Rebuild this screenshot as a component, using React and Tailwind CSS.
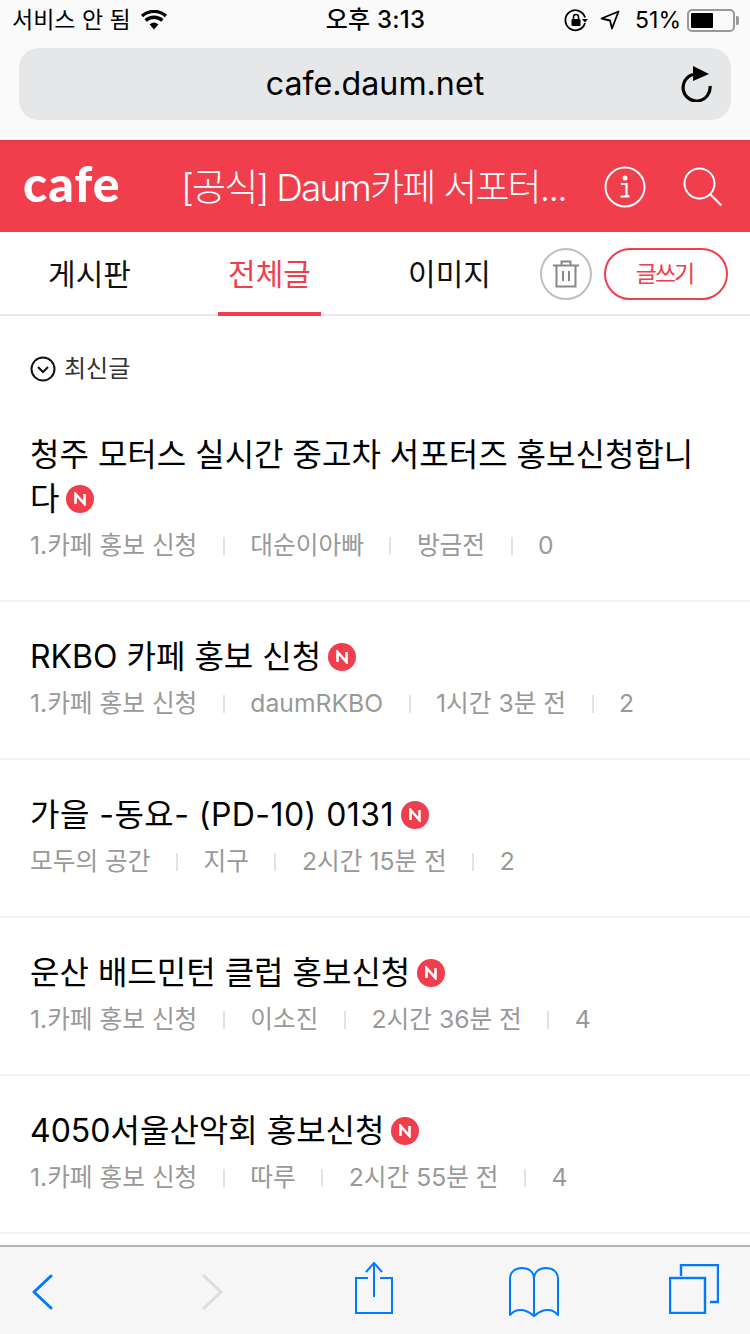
import { Fragment } from "react";

const font = "font-['Inter','Noto_Sans_CJK_KR',sans-serif]";

const posts = [
    { title: "청주 모터스 실시간 중고차 서포터즈 홍보신청합니다", meta: ["1.카페 홍보 신청", "대순이아빠", "방금전", "0"] },
    { title: "RKBO 카페 홍보 신청", meta: ["1.카페 홍보 신청", "daumRKBO", "1시간 3분 전", "2"] },
    { title: "가을 -동요- (PD-10) 0131", wide: true, meta: ["모두의 공간", "지구", "2시간 15분 전", "2"] },
    { title: "운산 배드민턴 클럽 홍보신청", meta: ["1.카페 홍보 신청", "이소진", "2시간 36분 전", "4"] },
    { title: "4050서울산악회 홍보신청", meta: ["1.카페 홍보 신청", "따루", "2시간 55분 전", "4"] },
];

const NewBadge = () => (
    <span className="inline-flex w-[28px] h-[28px] ml-[7px] rounded-full bg-[#f03e4d] items-center justify-center align-[4px]">
        <svg width="14" height="14" viewBox="0 0 14 14">
            <path d="M2.500 12V2L11.500 12V2" fill="none" stroke="#fff" strokeWidth="2.600" />
        </svg>
    </span>
);

const StatusBar = () => (
    <div className="h-[40px] flex items-center justify-between pl-[12px] pr-[11px] text-[23px] text-black">
        <div className="w-[250px] flex items-center gap-[9px]">
            <span className="whitespace-nowrap">서비스 안 됨</span>
            <svg width="28" height="20" viewBox="0 0 28 20">
                <path d="M14 19.500 9.600 14.400a7 7 0 0 1 8.800 0Z" fill="#000" />
                <path d="M5.600 10.500a12.600 12.600 0 0 1 16.800 0M2 6a18 18 0 0 1 24 0" fill="none" stroke="#000" strokeWidth="3.400" />
            </svg>
        </div>
        <span className="font-medium text-[24px] tracking-[0.2px]">오후 3:13</span>
        <div className="w-[250px] flex items-center justify-end">
            <svg width="24" height="24" viewBox="0 0 24 24" className="mr-[12px]">
                <path d="M21 9.500A10 10 0 1 0 21 15" fill="none" stroke="#000" strokeWidth="1.800" />
                <path d="M18 11h6l-3 3.600Z" fill="#000" />
                <rect x="7.500" y="11" width="9" height="7" rx="1" fill="#000" />
                <path d="M9.500 11V9a2.500 2.500 0 0 1 5 0v2" fill="none" stroke="#000" strokeWidth="1.600" />
            </svg>
            <svg width="20" height="20" viewBox="0 0 20 20" className="mr-[15px]">
                <path d="M18.500 1.500 1.500 8.500 10 10.500 12 18.500Z" fill="none" stroke="#000" strokeWidth="1.800" strokeLinejoin="round" />
            </svg>
            <span className="mr-[6px]">51%</span>
            <div className="w-[48px] h-[23px] rounded-[5px] border-2 border-[#999] p-[2px]">
                <div className="w-[22px] h-full bg-black rounded-[1px]" />
            </div>
            <div className="w-[3px] h-[9px] bg-[#999] rounded-r-[2px] ml-[1px]" />
        </div>
    </div>
);

const UrlBar = () => (
    <div className="h-[100px] px-[19px] pt-[8px]">
        <div className="relative h-[72px] rounded-[20px] bg-[#e6e7e9] flex items-center justify-center text-[32.200px] text-black">
            cafe.daum.net
            <svg width="32" height="36" viewBox="0 0 32 36" className="absolute right-[18px] top-[18px]">
                <path d="M12 8.500A13.500 13.500 0 1 0 29 20" fill="none" stroke="#000" strokeWidth="3.200" />
                <path d="M12 0 28 8 12 15Z" fill="#000" />
            </svg>
        </div>
    </div>
);

const CafeHeader = () => (
    <div className="h-[92px] bg-[#f03e4d] border-t border-[#d33a48] flex items-center text-white">
        <span className="w-[160px] pl-[23px] text-[50px] leading-none font-['Lato',sans-serif] font-black tracking-[1px] pb-[8px]">cafe</span>
        <span className="w-[424px] pl-[21px] pt-[2px] text-[37px] font-light tracking-[-1.800px] whitespace-nowrap">[공식] Daum카페 서포터...</span>
        <svg width="42" height="42" viewBox="0 0 42 42" className="ml-[20px]">
            <circle cx="21" cy="21" r="19.500" fill="none" stroke="#fff" strokeWidth="2" />
            <circle cx="21" cy="12" r="2.500" fill="#fff" />
            <path d="M17 18h5.500v12H25M16.500 30.500h9" fill="none" stroke="#fff" strokeWidth="2.200" />
        </svg>
        <svg width="40" height="40" viewBox="0 0 40 40" className="ml-[37px]">
            <circle cx="16.500" cy="16.500" r="15" fill="none" stroke="#fff" strokeWidth="2" />
            <path d="M27 27 38.500 38.500" stroke="#fff" strokeWidth="2.200" />
        </svg>
    </div>
);

const Tabs = () => (
    <div className="h-[84px] border-b-2 border-[#e8e8e8] flex text-[30px] text-[#111]">
        <div className="w-[179px] flex items-center justify-center pt-[2px]">게시판</div>
        <div className="w-[103px] ml-[39px] h-[84px] border-b-[4px] border-[#f03e4d] text-[#f03e4d] flex items-center justify-center pt-[4px]">전체글</div>
        <div className="w-[179px] ml-[39px] flex items-center justify-center pt-[2px]">이미지</div>
        <div className="w-[52px] h-[52px] mt-[16px] ml-[1px] rounded-full border-2 border-[#c0c0c0] flex items-center justify-center">
            <svg width="26" height="28" viewBox="0 0 26 28" fill="none" stroke="#888" strokeWidth="2">
                <path d="M0 5.500h26M8.500 5V1.500h9V5M3.500 6v20.500h19V6M10 11v10M16 11v10" />
            </svg>
        </div>
        <div className="w-[124px] h-[52px] mt-[16px] ml-[12px] pr-[3px] rounded-full border-2 border-[#f03e4d] text-[#f03e4d] text-[23px] tracking-[-2px] flex items-center justify-center">글쓰기</div>
    </div>
);

const PostRow = ({ post }) => (
    <div className="border-b-2 border-[#f2f2f2] px-[30px] pt-[33px] pb-[32px] first:pt-[14px] first:pb-[33px]">
        <div className={`text-[32px] leading-[44px] text-black ${post.wide ? "tracking-[0.45px]" : ""}`}>
            {post.title}
            <NewBadge />
        </div>
        <div className="mt-[3px] h-[44px] flex items-center text-[24.700px] text-[#999]">
            {post.meta.map((m, i) => (
                <Fragment key={i}>
                    {i > 0 && <span className="w-[2px] h-[18px] mx-[25.500px] bg-[#e3e3e3]" />}
                    <span className="whitespace-nowrap">{m}</span>
                </Fragment>
            ))}
        </div>
    </div>
);

const BottomBar = () => (
    <div className="h-[89px] border-t-2 border-[#b4b4b4] bg-[#f6f6f6] flex items-start pl-[32px]">
        <svg width="22" height="36" viewBox="0 0 22 36" fill="none" stroke="#007aff" strokeWidth="3" strokeLinecap="round" strokeLinejoin="round" className="mt-[27px]">
            <path d="M19 2 2 18l17 16" />
        </svg>
        <svg width="22" height="36" viewBox="0 0 22 36" fill="none" stroke="#dcdcdc" strokeWidth="3" strokeLinecap="round" strokeLinejoin="round" className="mt-[27px] ml-[147px]">
            <path d="m3 2 17 16L3 34" />
        </svg>
        <svg width="40" height="54" viewBox="0 0 40 54" fill="none" stroke="#007aff" strokeWidth="2" className="mt-[14px] ml-[132px]">
            <path d="M13 17H1v35h36V17H25M19 36V2M11 11l8-9 8 9" />
        </svg>
        <svg width="50" height="50" viewBox="0 0 50 50" fill="none" stroke="#007aff" strokeWidth="2" strokeLinejoin="round" className="mt-[20px] ml-[114px]">
            <path d="M25 48V12C25 5 20 1 13 1S1 5 1 12v36c3-3 5-5 11-5s9 3 13 6c4-3 7-6 13-6s8 2 11 5V12C49 5 44 1 37 1s-12 4-12 11" />
        </svg>
        <svg width="50" height="50" viewBox="0 0 50 50" fill="none" stroke="#007aff" strokeWidth="2.400" className="mt-[17px] ml-[110px]">
            <path d="M12 12V1h37v37h-8" />
            <rect x="1" y="14" width="35" height="35" />
        </svg>
    </div>
);

export default function App() {
    return (
        <div className={`w-[750px] h-[1334px] bg-white flex flex-col overflow-hidden ${font}`}>
            <div className="bg-[#fafafa]">
                <StatusBar />
                <UrlBar />
            </div>
            <CafeHeader />
            <Tabs />
            <div className="flex-1 overflow-hidden">
                <div className="pl-[30px] pt-[35px] pb-[13px] flex items-center text-[24px] text-[#333]">
                    <svg width="26" height="26" viewBox="0 0 26 26" fill="none" stroke="#111" strokeWidth="2" className="mr-[8px]">
                        <circle cx="13" cy="13" r="11.500" />
                        <path d="m8 11 5 5 5-5" />
                    </svg>
                    최신글
                </div>
                {posts.map((post, i) => (
                    <PostRow key={i} post={post} />
                ))}
            </div>
            <BottomBar />
        </div>
    );
}
